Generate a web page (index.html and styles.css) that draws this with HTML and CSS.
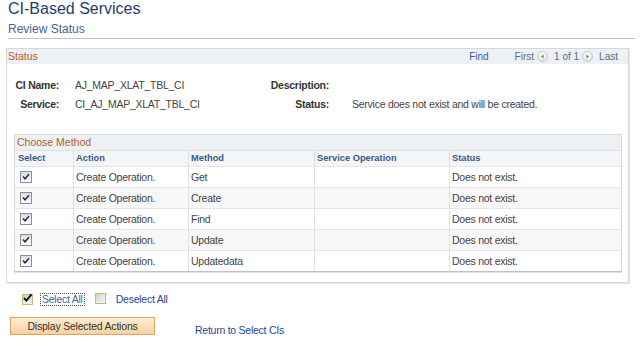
FILE: index.html
```html
<!DOCTYPE html>
<html>
<head>
<meta charset="utf-8">
<title>CI-Based Services</title>
<link rel="stylesheet" href="styles.css">
</head>
<body>
<div class="page">
  <h1 class="title">CI-Based Services</h1>
  <h2 class="subtitle">Review Status</h2>
  <div class="rule"></div>

  <section class="box">
    <div class="box-head">
      <span class="box-title">Status</span>
      <div class="nav">
        <span class="find">Find</span>
        <span class="navtext">First</span>
        <svg class="navicon" width="11" height="11" viewBox="0 0 11 11"><circle cx="5.5" cy="5.5" r="5" fill="#e4e4e4" stroke="#c8c8c8"/><circle cx="5.5" cy="4.5" r="3.5" fill="#f6f6f6"/><path d="M6.6 3.4 L4 5.5 L6.6 7.6 Z" fill="#7a7a7a"/></svg>
        <span class="navtext">1 of 1</span>
        <svg class="navicon" width="11" height="11" viewBox="0 0 11 11"><circle cx="5.5" cy="5.5" r="5" fill="#e4e4e4" stroke="#c8c8c8"/><circle cx="5.5" cy="4.5" r="3.5" fill="#f6f6f6"/><path d="M4.4 3.4 L7 5.5 L4.4 7.6 Z" fill="#7a7a7a"/></svg>
        <span class="navtext">Last</span>
      </div>
    </div>

    <div class="info">
      <span class="lbl">CI Name:</span><span class="val">AJ_MAP_XLAT_TBL_CI</span><span class="lbl">Description:</span><span class="val2"></span>
      <span class="lbl">Service:</span><span class="val">CI_AJ_MAP_XLAT_TBL_CI</span><span class="lbl">Status:</span><span class="val2">Service does not exist and will be created.</span>
    </div>

    <div class="grid">
      <div class="grid-title">Choose Method</div>
      <div class="row head"><div>Select</div><div>Action</div><div>Method</div><div>Service Operation</div><div>Status</div></div>
      <div class="row data"><div class="cbcell"><span class="cb"><svg width="10" height="10" viewBox="0 0 10 10"><path d="M2 4.6 L4 6.8 L8 2.2" fill="none" stroke="#1a2a6e" stroke-width="1.5"/></svg></span></div><div>Create Operation.</div><div>Get</div><div></div><div>Does not exist.</div></div>
      <div class="row data"><div class="cbcell"><span class="cb"><svg width="10" height="10" viewBox="0 0 10 10"><path d="M2 4.6 L4 6.8 L8 2.2" fill="none" stroke="#1a2a6e" stroke-width="1.5"/></svg></span></div><div>Create Operation.</div><div>Create</div><div></div><div>Does not exist.</div></div>
      <div class="row data"><div class="cbcell"><span class="cb"><svg width="10" height="10" viewBox="0 0 10 10"><path d="M2 4.6 L4 6.8 L8 2.2" fill="none" stroke="#1a2a6e" stroke-width="1.5"/></svg></span></div><div>Create Operation.</div><div>Find</div><div></div><div>Does not exist.</div></div>
      <div class="row data"><div class="cbcell"><span class="cb"><svg width="10" height="10" viewBox="0 0 10 10"><path d="M2 4.6 L4 6.8 L8 2.2" fill="none" stroke="#1a2a6e" stroke-width="1.5"/></svg></span></div><div>Create Operation.</div><div>Update</div><div></div><div>Does not exist.</div></div>
      <div class="row data"><div class="cbcell"><span class="cb"><svg width="10" height="10" viewBox="0 0 10 10"><path d="M2 4.6 L4 6.8 L8 2.2" fill="none" stroke="#1a2a6e" stroke-width="1.5"/></svg></span></div><div>Create Operation.</div><div>Updatedata</div><div></div><div>Does not exist.</div></div>
    </div>
  </section>

  <div class="selects">
    <span class="cb2 checked"><svg width="11" height="11" viewBox="0 0 11 11"><path d="M2 5 L4.4 7.6 L9.6 1.2" fill="none" stroke="#111" stroke-width="1.9"/></svg></span>
    <span class="sel-all">Select All</span>
    <span class="cb2 empty"></span>
    <span class="desel">Deselect All</span>
  </div>

  <div class="actions">
    <button class="btn" type="button">Display Selected Actions</button>
    <span class="return">Return to Select CIs</span>
  </div>
</div>
</body>
</html>
```

FILE: styles.css
```css
body {
  margin: 0;
  background: #ffffff;
  font-family: "Liberation Sans", Arial, sans-serif;
  color: #333333;
}

.page {
  width: 640px;
}

.title {
  margin: 0;
  padding-left: 8px;
  font-size: 16px;
  line-height: 18px;
  font-weight: normal;
  color: #1f3d6d;
}

.subtitle {
  margin: 4px 0 0;
  padding-left: 8px;
  font-size: 12px;
  line-height: 14px;
  font-weight: normal;
  color: #4b6290;
}

.rule {
  margin: 2px 5px 0 8px;
  border-top: 1px solid #c4c4c4;
}

.box {
  margin: 9px 0 0 6px;
  width: 621px;
  border: 1px solid #d3d8dc;
  box-shadow: 1px 1px 0 #e6e6e6;
  padding-bottom: 10px;
}

.box-head {
  display: flex;
  align-items: center;
  height: 15px;
  background: #eef1f3;
  padding: 0 10px 0 1px;
}

.box-title {
  font-size: 10.5px;
  line-height: 15px;
  color: #b5601f;
}

.nav {
  margin-left: auto;
  display: flex;
  align-items: center;
  font-size: 10px;
  line-height: 15px;
}

.find {
  color: #2d5da8;
  margin-right: 26px;
}

.navtext {
  color: #5a6c8a;
}

.navicon {
  display: block;
  margin: 0 6px 0 3px;
}

.info {
  display: grid;
  grid-template-columns: 52px 201px 69px 1fr;
  grid-auto-rows: 19px;
  line-height: 19px;
  padding-top: 12px;
  font-size: 10.5px;
  letter-spacing: -0.25px;
  white-space: nowrap;
}

.lbl {
  text-align: right;
  font-weight: bold;
  color: #333333;
}

.val {
  padding-left: 16px;
  color: #444444;
}

.val2 {
  padding-left: 23px;
  color: #444444;
}

.grid {
  margin: 20px 0 0 7px;
  width: 606px;
  border: 1px solid #d6dce0;
  border-bottom-color: #bcc4ca;
  box-shadow: 0 1px 0 #e2e2e2;
}

.grid-title {
  height: 15px;
  line-height: 15px;
  background: #eef1f3;
  border-bottom: 1px solid #dde2e6;
  padding-left: 2px;
  font-size: 10.5px;
  color: #b5601f;
}

.row {
  display: grid;
  grid-template-columns: 59px 115px 126px 135px 1fr;
  border-bottom: 1px solid #e3e7ea;
}

.row > div {
  border-right: 1px solid #dde2e6;
  padding-left: 2px;
  white-space: nowrap;
  overflow: hidden;
}

.row > div:last-child {
  border-right: none;
}

.row.head {
  height: 15px;
  line-height: 15px;
  background: #f3f5f7;
  font-weight: bold;
  font-size: 9.3px;
  color: #3a5a8a;
}

.row.head > div:first-child {
  padding-left: 3px;
}

.row.data {
  height: 20px;
  line-height: 21px;
  font-size: 10.5px;
  letter-spacing: -0.25px;
  color: #444444;
}

.row.data:nth-child(even) {
  background: #f7f7f7;
}

.row.data:last-child {
  border-bottom: none;
}

.row > .cbcell {
  display: flex;
  align-items: center;
  padding-left: 5px;
}

.cb {
  display: flex;
  align-items: center;
  justify-content: center;
  width: 10px;
  height: 10px;
  border: 1px solid #8e8e8e;
  background: linear-gradient(#dcdcdc, #ffffff);
}

.selects {
  display: flex;
  align-items: center;
  height: 14px;
  margin-top: 9px;
  padding-left: 22px;
  font-size: 10.5px;
  letter-spacing: -0.25px;
}

.cb2 {
  display: block;
  box-sizing: border-box;
  width: 11px;
  height: 11px;
  border: 1px solid #c2bb72;
  background: linear-gradient(#cfcfcf, #f2f2f2);
}

.cb2.checked {
  position: relative;
}

.cb2.checked svg {
  position: absolute;
  left: -1px;
  top: -2px;
}

.cb2.empty {
  margin-left: 11px;
  margin-top: -2px;
  background: linear-gradient(135deg, #d2d2d2, #f8f8f8);
}

.sel-all {
  margin-left: 8px;
  padding: 0 1px;
  line-height: 11px;
  outline: 1px dotted #555555;
  color: #4a5f8f;
}

.desel {
  margin-left: 10px;
  color: #28479a;
}

.actions {
  display: flex;
  align-items: flex-end;
  margin-top: 11px;
  padding-left: 10px;
}

.btn {
  display: block;
  box-sizing: border-box;
  width: 145px;
  height: 18px;
  margin: 0;
  padding: 0;
  border: 1px solid #dca464;
  background: linear-gradient(#fdecd3, #f7d2a0);
  font-family: "Liberation Sans", Arial, sans-serif;
  font-size: 10.5px;
  letter-spacing: -0.2px;
  line-height: 16px;
  color: #333333;
  text-align: center;
}

.return {
  margin-left: 40px;
  margin-bottom: -2px;
  font-size: 10.5px;
  letter-spacing: -0.25px;
  line-height: 14px;
  color: #28479a;
}
```
